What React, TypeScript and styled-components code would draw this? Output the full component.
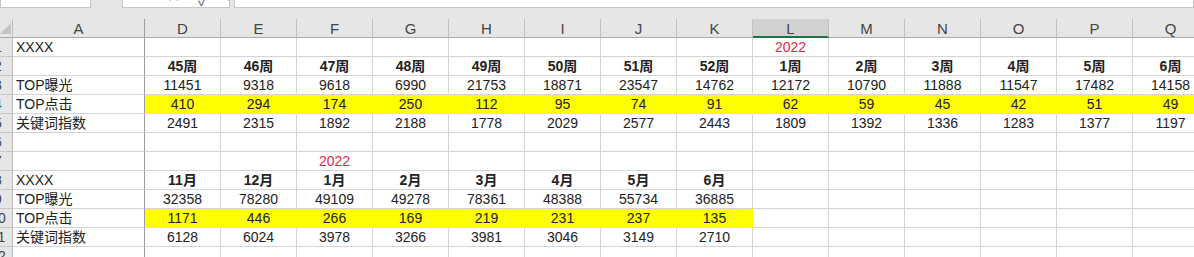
import styled, { createGlobalStyle, css } from "styled-components";

const GlobalStyle = createGlobalStyle`
  html, body {
    margin: 0;
    padding: 0;
    background: #ffffff;
    overflow: hidden;
  }
  body {
    width: 1194px;
    height: 257px;
  }
`;

const Page = styled.div`
  width: 1194px;
  height: 257px;
  overflow: hidden;
  font-family: "Liberation Sans", "Noto Sans CJK SC", sans-serif;
`;

const FormulaBar = styled.div`
  display: flex;
  height: 19px;
  background: #e6e6e6;
  box-sizing: border-box;
`;

const BarBox = styled.div<{ $width?: number; $gap?: number }>`
  height: 8px;
  box-sizing: border-box;
  background: #ffffff;
  border: 1px solid #c6c6c6;
  border-top: none;
  overflow: hidden;
  ${(p) => (p.$width ? `width: ${p.$width}px;` : "flex: 1;")}
  margin-right: ${(p) => p.$gap ?? 0}px;
`;

const BarIcons = styled.div`
  display: flex;
  gap: 18px;
  padding-left: 44px;
  margin-top: -13px;
  font-size: 16px;
  color: #777777;
`;

const Sheet = styled.div`
  display: grid;
  grid-template-columns: 13px 132px repeat(14, 76px);
  grid-auto-rows: 19px;
`;

const cellBase = css`
  box-sizing: border-box;
  border-right: 1px solid #d4d4d4;
  border-bottom: 1px solid #d4d4d4;
  font-size: 14px;
  line-height: 18px;
  white-space: nowrap;
  overflow: hidden;
`;

const Corner = styled.div`
  box-sizing: border-box;
  background: #e6e6e6;
  border-right: 1px solid #bdbdbd;
  border-bottom: 1px solid #ababab;
  display: flex;
  align-items: flex-end;
  justify-content: flex-end;
  padding: 0 1px 3px 0;
`;

const Triangle = styled.div`
  width: 0;
  height: 0;
  border-left: 11px solid transparent;
  border-bottom: 11px solid #c4c4c4;
`;

const ColHead = styled.div<{ $selected?: boolean; $strong?: boolean }>`
  box-sizing: border-box;
  background: ${(p) => (p.$selected ? "#d2d2d2" : "#e6e6e6")};
  border-right: 1px solid ${(p) => (p.$strong ? "#9e9e9e" : "#c0c0c0")};
  border-bottom: ${(p) => (p.$selected ? "2px solid #217346" : "1px solid #ababab")};
  color: #444444;
  font-size: 15px;
  line-height: 20px;
  text-align: center;
`;

const RowHead = styled.div`
  box-sizing: border-box;
  background: #e6e6e6;
  border-right: 1px solid #bdbdbd;
  border-bottom: 1px solid #c8c8c8;
  color: #444444;
  font-size: 14px;
  line-height: 18px;
  overflow: hidden;
`;

const RowNum = styled.span`
  display: block;
  width: 30px;
  margin-left: -17px;
  text-align: center;
`;

const LabelCell = styled.div`
  ${cellBase};
  border-right-color: #9e9e9e;
  padding-left: 3px;
  color: #222222;
`;

const Cell = styled.div<{ $fill?: boolean; $bold?: boolean; $red?: boolean }>`
  ${cellBase};
  text-align: center;
  color: ${(p) => (p.$red ? "#dc2c46" : "#222222")};
  font-weight: ${(p) => (p.$bold ? 700 : 400)};
  ${(p) =>
    p.$fill &&
    css`
      background: #ffff00;
      border-right-color: #ffff00;
      border-bottom-color: #ffff00;
    `}
`;

const columns = ["D", "E", "F", "G", "H", "I", "J", "K", "L", "M", "N", "O", "P", "Q"];

interface RowData {
  n: number;
  label: string;
  cells: string[];
  bold?: boolean;
  red?: boolean;
  fill?: number;
}

const rows: RowData[] = [
  { n: 1, label: "XXXX", cells: ["", "", "", "", "", "", "", "", "2022"], red: true },
  {
    n: 2,
    label: "",
    cells: ["45周", "46周", "47周", "48周", "49周", "50周", "51周", "52周", "1周", "2周", "3周", "4周", "5周", "6周"],
    bold: true,
  },
  {
    n: 3,
    label: "TOP曝光",
    cells: ["11451", "9318", "9618", "6990", "21753", "18871", "23547", "14762", "12172", "10790", "11888", "11547", "17482", "14158"],
  },
  {
    n: 4,
    label: "TOP点击",
    cells: ["410", "294", "174", "250", "112", "95", "74", "91", "62", "59", "45", "42", "51", "49"],
    fill: 14,
  },
  {
    n: 5,
    label: "关键词指数",
    cells: ["2491", "2315", "1892", "2188", "1778", "2029", "2577", "2443", "1809", "1392", "1336", "1283", "1377", "1197"],
  },
  { n: 6, label: "", cells: [] },
  { n: 7, label: "", cells: ["", "", "2022"], red: true },
  { n: 8, label: "XXXX", cells: ["11月", "12月", "1月", "2月", "3月", "4月", "5月", "6月"], bold: true },
  { n: 9, label: "TOP曝光", cells: ["32358", "78280", "49109", "49278", "78361", "48388", "55734", "36885"] },
  { n: 10, label: "TOP点击", cells: ["1171", "446", "266", "169", "219", "231", "237", "135"], fill: 8 },
  { n: 11, label: "关键词指数", cells: ["6128", "6024", "3978", "3266", "3981", "3046", "3149", "2710"] },
  { n: 12, label: "", cells: [] },
];

const App = () => {
  return (
    <Page>
      <GlobalStyle />
      <FormulaBar>
        <BarBox $width={91} $gap={31} />
        <BarBox $width={108} $gap={4}>
          <BarIcons>
            <span>✕</span>
            <span>✓</span>
            <span>fx</span>
          </BarIcons>
        </BarBox>
        <BarBox />
      </FormulaBar>
      <Sheet>
        <Corner>
          <Triangle />
        </Corner>
        <ColHead $strong>A</ColHead>
        {columns.map((c) => (
          <ColHead key={c} $selected={c === "L"}>
            {c}
          </ColHead>
        ))}
        {rows.map((row) => (
          <Row key={row.n} row={row} />
        ))}
      </Sheet>
    </Page>
  );
};

const Row = ({ row }: { row: RowData }) => (
  <>
    <RowHead>
      <RowNum>{row.n}</RowNum>
    </RowHead>
    <LabelCell>{row.label}</LabelCell>
    {columns.map((c, i) => (
      <Cell key={c} $bold={row.bold} $red={row.red} $fill={i < (row.fill ?? 0)}>
        {row.cells[i] ?? ""}
      </Cell>
    ))}
  </>
);

export default App;
